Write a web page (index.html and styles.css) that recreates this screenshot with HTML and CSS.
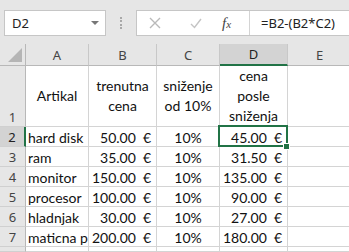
FILE: index.html
```html
<!DOCTYPE html>
<html lang="hr">
<head>
  <meta charset="UTF-8">
  <meta name="viewport" content="width=device-width, initial-scale=1.0">
  <title>Artikli</title>
  <link rel="stylesheet" href="styles.css">
</head>
<body>
  <div class="toolbar">
    <div class="namebox">
      <span>D2</span>
      <span class="caret"></span>
    </div>
    <div class="grip"></div>
    <div class="formula">
      <div class="fbuttons">
        <svg class="icon" width="12" height="12" viewBox="0 0 12 12">
          <path d="M1 1 L11 11 M11 1 L1 11" stroke="#b9b9b9" stroke-width="1.4" fill="none"/>
        </svg>
        <svg class="icon" width="12" height="12" viewBox="0 0 12 12">
          <path d="M1 7 L4.5 10.5 L11 2" stroke="#c4c4c4" stroke-width="1.4" fill="none"/>
        </svg>
        <span class="fx">f<small>x</small></span>
      </div>
      <div class="ftext">=B2-(B2*C2)</div>
    </div>
  </div>

  <div class="sheet">
    <div class="hd corner">
      <svg width="14" height="14" viewBox="0 0 14 14"><polygon points="14,0 14,14 0,14" fill="#b5b5b5"/></svg>
    </div>
    <div class="hd col">A</div>
    <div class="hd col">B</div>
    <div class="hd col">C</div>
    <div class="hd col active">D</div>
    <div class="hd col">E</div>

    <div class="rh top">1</div>
    <div class="c title">Artikal</div>
    <div class="c title">trenutna<br>cena</div>
    <div class="c title">sniženje<br>od 10%</div>
    <div class="c title">cena<br>posle<br>sniženja</div>
    <div class="c"></div>

    <div class="rh active">2</div>
    <div class="c">hard disk</div>
    <div class="c money"><span>50.00</span><span class="eur">€</span></div>
    <div class="c pct">10%</div>
    <div class="c money selected"><span>45.00</span><span class="eur">€</span></div>
    <div class="c"></div>

    <div class="rh">3</div>
    <div class="c">ram</div>
    <div class="c money"><span>35.00</span><span class="eur">€</span></div>
    <div class="c pct">10%</div>
    <div class="c money"><span>31.50</span><span class="eur">€</span></div>
    <div class="c"></div>

    <div class="rh">4</div>
    <div class="c">monitor</div>
    <div class="c money"><span>150.00</span><span class="eur">€</span></div>
    <div class="c pct">10%</div>
    <div class="c money"><span>135.00</span><span class="eur">€</span></div>
    <div class="c"></div>

    <div class="rh">5</div>
    <div class="c">procesor</div>
    <div class="c money"><span>100.00</span><span class="eur">€</span></div>
    <div class="c pct">10%</div>
    <div class="c money"><span>90.00</span><span class="eur">€</span></div>
    <div class="c"></div>

    <div class="rh">6</div>
    <div class="c">hladnjak</div>
    <div class="c money"><span>30.00</span><span class="eur">€</span></div>
    <div class="c pct">10%</div>
    <div class="c money"><span>27.00</span><span class="eur">€</span></div>
    <div class="c"></div>

    <div class="rh">7</div>
    <div class="c">maticna ploča</div>
    <div class="c money"><span>200.00</span><span class="eur">€</span></div>
    <div class="c pct">10%</div>
    <div class="c money"><span>180.00</span><span class="eur">€</span></div>
    <div class="c"></div>

    <div class="rh"></div>
    <div class="c"></div>
    <div class="c"></div>
    <div class="c"></div>
    <div class="c"></div>
    <div class="c"></div>
  </div>
</body>
</html>
```

FILE: styles.css
```css
body {
  margin: 0;
  width: 349px;
  height: 252px;
  overflow: hidden;
  background: #fff;
  font-family: 'Noto Sans', sans-serif;
}

.toolbar {
  height: 44px;
  background: #e6e6e6;
  display: flex;
  align-items: flex-start;
  padding: 10px 0 0 4px;
  box-sizing: border-box;
}

.namebox {
  width: 102px;
  height: 26px;
  box-sizing: border-box;
  background: #fff;
  border: 1px solid #c6c6c6;
  display: flex;
  align-items: center;
  justify-content: space-between;
  padding: 0 6px 0 7px;
  font-size: 13px;
  color: #222;
}

.caret {
  width: 0;
  height: 0;
  border-left: 4px solid transparent;
  border-right: 4px solid transparent;
  border-top: 4px solid #777;
}

.grip {
  width: 0;
  height: 12px;
  margin: 7px 0 0 14px;
  border-left: 2px dotted #a8a8a8;
}

.formula {
  flex: 1;
  height: 26px;
  margin-left: 14px;
  box-sizing: border-box;
  background: #fff;
  border: 1px solid #c6c6c6;
  border-right: none;
  display: flex;
}

.fbuttons {
  width: 113px;
  box-sizing: border-box;
  border-right: 1px solid #d4d4d4;
  display: flex;
  align-items: center;
  padding-left: 12px;
  gap: 29px;
}

.fx {
  font-family: 'Liberation Serif', serif;
  font-style: italic;
  font-size: 15px;
  color: #444;
  margin-left: -9px;
}

.fx small {
  font-size: 11px;
}

.ftext {
  padding-left: 11px;
  font-size: 13px;
  line-height: 24px;
  color: #222;
  white-space: nowrap;
}

.sheet {
  display: grid;
  grid-template-columns: 26px 63px 68px 63px 68px 64px;
  grid-template-rows: 22px 61px repeat(6, 20px) 5px;
}

.hd {
  background: #e6e6e6;
  border-right: 1px solid #c8c8c8;
  border-bottom: 1px solid #b8b8b8;
  font-size: 13px;
  color: #444;
  display: flex;
  align-items: center;
  justify-content: center;
  box-sizing: border-box;
}

.corner {
  align-items: flex-end;
  justify-content: flex-end;
  padding: 0 3px 3px 0;
  border-right-color: #b8b8b8;
}

.hd.active {
  background: #d3d3d3;
  border-bottom: 2px solid #217346;
  color: #222;
}

.rh {
  background: #e6e6e6;
  border-right: 1px solid #b8b8b8;
  border-bottom: 1px solid #d0d0d0;
  font-size: 13px;
  color: #444;
  display: flex;
  align-items: flex-end;
  justify-content: center;
  line-height: 18px;
  box-sizing: border-box;
}

.rh.active {
  background: #d3d3d3;
  border-right: 2px solid #217346;
  color: #222;
}

.c {
  position: relative;
  border-right: 1px solid #d4d4d4;
  border-bottom: 1px solid #d4d4d4;
  box-sizing: border-box;
  font-family: Lato, sans-serif;
  font-size: 14px;
  line-height: 17px;
  color: #111;
  padding: 0 2px 0 2px;
  display: flex;
  align-items: flex-end;
  white-space: nowrap;
  overflow: hidden;
}

.c.title {
  align-items: center;
  justify-content: center;
  text-align: center;
  line-height: 20px;
  white-space: normal;
}

.c.money {
  justify-content: flex-end;
  padding-right: 5px;
}

.eur {
  margin-left: 7px;
}

.c.pct {
  justify-content: center;
}

.c.selected {
  overflow: visible;
}

.c.selected::after {
  content: "";
  position: absolute;
  left: -2px;
  top: -2px;
  width: 70px;
  height: 22px;
  border: 2px solid #217346;
  box-sizing: border-box;
  z-index: 2;
}

.c.selected::before {
  content: "";
  position: absolute;
  right: -3px;
  bottom: -4px;
  width: 5px;
  height: 5px;
  background: #217346;
  border: 1px solid #fff;
  z-index: 3;
}
```
